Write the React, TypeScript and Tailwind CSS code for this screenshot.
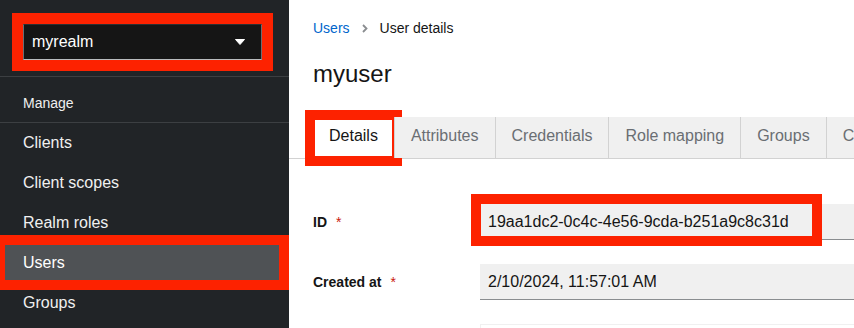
const font = "font-['Liberation_Sans','Noto_Sans',sans-serif]";

const navItems = ["Clients", "Client scopes", "Realm roles", "Users", "Groups"];
const tabs = ["Details", "Attributes", "Credentials", "Role mapping", "Groups", "Consents", "Sessions"];

const Callout = ({ className }: { className: string }) => (
  <div className={`pointer-events-none absolute border-[10px] border-[#fd2200] ${className}`} />
);

const Sidebar = () => {
  return (
    <aside className="flex w-[289px] shrink-0 flex-col bg-[#212427] text-[#f0f0f0]">
      <div className="border-b border-[#3c3f42] pl-[23px] pr-[27px] pt-6 pb-4">
        <div className="relative">
          <div className="flex h-9 items-center justify-between border border-[#6a6e73] border-b-[#b8bbbe] border-t-[#2b2e31] bg-[#151515] pl-2 pr-4 text-base text-white">
            <span>myrealm</span>
            <svg width="10" height="6" viewBox="0 0 10 6">
              <path d="M0.5 0.5h9L5 5.5z" fill="#ffffff" stroke="#ffffff" strokeLinejoin="round" />
            </svg>
          </div>
          <Callout className="-inset-[11px] border-[11px]" />
        </div>
      </div>
      <div className="border-b border-[#3c3f42] px-[23px] pt-4 pb-[9px] text-sm leading-5 text-[#f0f0f0]">
        Manage
      </div>
      <nav className="flex flex-col">
        {navItems.map((item) => {
          const active = item === "Users";
          return (
            <div
              key={item}
              className={`relative flex h-10 items-center px-[23px] text-base ${
                active ? "bg-[#4f5255] text-white" : ""
              }`}
            >
              {item}
              {active && <Callout className="top-[-8px] bottom-[-7px] left-[-5px] right-0" />}
            </div>
          );
        })}
      </nav>
    </aside>
  );
};

const FormRow = ({ label, value, boxed }: { label: string; value: string; boxed?: boolean }) => (
  <div className="flex items-center">
    <div className="w-[167px] shrink-0 text-sm font-bold text-[#151515]">
      {label}
      <span className="ml-[9px] font-normal text-[#c9190b]">*</span>
    </div>
    <div className="relative w-[600px] shrink-0">
      <div className="flex h-9 items-center border-b border-[#8a8d90] bg-[#f0f0f0] pl-2 text-base text-[#151515]">
        {value}
      </div>
      {boxed && <Callout className="left-[-9px] top-[-10px] h-[52px] w-[351px]" />}
    </div>
  </div>
);

export default function App() {
  return (
    <div className={`flex h-[328px] w-[854px] overflow-hidden bg-white ${font}`}>
      <Sidebar />
      <main className="flex min-w-0 flex-1 flex-col overflow-hidden">
        <div className="flex items-center px-6 pt-[18px] text-sm leading-5">
          <a className="text-[#0066cc]">Users</a>
          <svg className="mx-3" width="6" height="9" viewBox="0 0 6 9">
            <path d="M1 1l3.5 3.5L1 8" fill="none" stroke="#8a8d90" strokeWidth="1.8" />
          </svg>
          <span className="text-[#151515]">User details</span>
        </div>
        <h1 className="mt-5 px-6 text-2xl leading-8 text-[#151515]">myuser</h1>
        <div className="mt-[27px] flex border-b border-[#d2d2d2] pl-6 whitespace-nowrap">
          {tabs.map((tab) => {
            const active = tab === "Details";
            return (
              <div
                key={tab}
                className={`relative flex h-[41px] shrink-0 items-center px-4 pb-[3px] text-base ${
                  active ? "bg-white text-[#151515]" : "border-l border-[#d2d2d2] bg-[#f0f0f0] text-[#6a6e73]"
                }`}
              >
                {tab}
                {active && <Callout className="top-[-7px] bottom-[-8px] left-[-8px] right-[-8px]" />}
              </div>
            );
          })}
        </div>
        <div className="mt-[45px] flex flex-col gap-6 pl-6">
          <FormRow label="ID" value="19aa1dc2-0c4c-4e56-9cda-b251a9c8c31d" boxed />
          <FormRow label="Created at" value="2/10/2024, 11:57:01 AM" />
          <div className="flex">
            <div className="w-[167px] shrink-0" />
            <div className="h-9 w-[600px] shrink-0 border border-[#f0f0f0] border-b-[#8a8d90]" />
          </div>
        </div>
      </main>
    </div>
  );
}
